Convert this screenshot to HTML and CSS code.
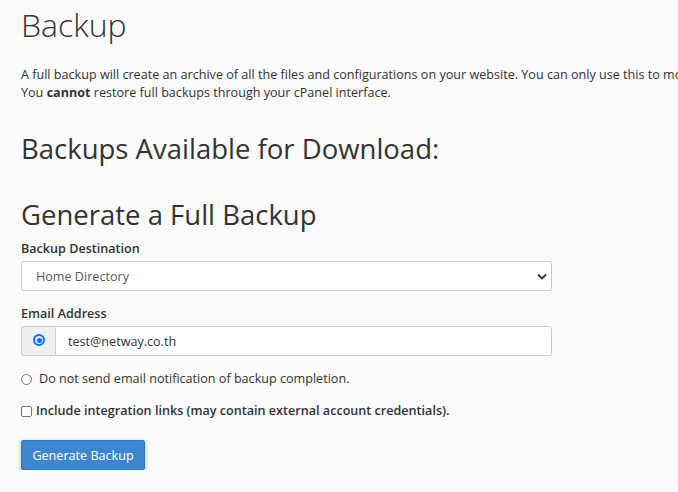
FILE: index.html
```html
<!DOCTYPE html>
<html lang="en">
<head>
  <meta charset="UTF-8">
  <title>Backup</title>
  <link rel="stylesheet" href="styles.css">
</head>
<body>

<div class="page">
  <h1>Backup</h1>

  <p class="intro">A full backup will create an archive of all the files and configurations on your website. You can only use this to move your account to another server or to keep a local copy of your files.</p>
  <p class="intro">You <strong>cannot</strong> restore full backups through your cPanel interface.</p>

  <h2 class="available">Backups Available for Download:</h2>

  <h2 class="generate">Generate a Full Backup</h2>

  <form class="backup-form">
    <div class="form-group">
      <label class="field-label" for="dest">Backup Destination</label>
      <div class="select-wrap">
        <select id="dest" class="form-control">
          <option>Home Directory</option>
        </select>
        <svg class="caret" width="10" height="7" viewBox="0 0 10 7"><path d="M1 1.5l4 4 4-4" fill="none" stroke="#333" stroke-width="1.8"/></svg>
      </div>
    </div>

    <div class="form-group">
      <label class="field-label" for="email">Email Address</label>
      <div class="input-group">
        <span class="addon"><span class="radio checked"></span></span>
        <input type="text" id="email" class="form-control" value="test@netway.co.th">
      </div>
    </div>

    <div class="option">
      <span class="radio"></span>
      <span>Do not send email notification of backup completion.</span>
    </div>

    <div class="option check">
      <span class="checkbox"></span>
      <span>Include integration links (may contain external account credentials).</span>
    </div>

    <button type="button" class="btn">Generate Backup</button>
  </form>
</div>

</body>
</html>
```

FILE: styles.css
```css
body {
  margin: 0;
  background: #fafafa;
  color: #333;
  font-family: 'Open Sans', sans-serif;
  font-size: 12.6px;
  overflow: hidden;
}

.page {
  padding: 5px 0 0 21px;
  width: 900px;
}

h1 {
  margin: 0;
  font-size: 32px;
  font-weight: 300;
  line-height: 40px;
}

.intro {
  margin: 0;
  line-height: 18px;
  white-space: nowrap;
}

h1 + .intro {
  margin-top: 21px;
}

.intro strong {
  font-weight: 700;
}

h2 {
  margin: 0;
  font-size: 27.5px;
  font-weight: 400;
  line-height: 32px;
}

.available {
  margin-top: 31px;
}

.generate {
  margin-top: 34px;
}

.backup-form {
  width: 531px;
  margin-top: 7px;
}

.form-group {
  margin-bottom: 12px;
}

.field-label {
  display: block;
  font-weight: 600;
  line-height: 18px;
  padding-top: 2px;
  margin-bottom: 3px;
}

.form-control {
  box-sizing: border-box;
  width: 100%;
  height: 30px;
  border: 1px solid #ccc;
  border-radius: 3px;
  background: #fff;
  font-family: 'Open Sans', sans-serif;
  font-size: 12.6px;
  color: #555;
  padding: 0 12px;
}

.select-wrap {
  position: relative;
}

select.form-control {
  appearance: none;
  -webkit-appearance: none;
  padding-left: 14px;
}

.caret {
  position: absolute;
  right: 5px;
  top: 12px;
  pointer-events: none;
}

.input-group {
  display: flex;
}

.addon {
  box-sizing: border-box;
  flex: none;
  width: 34px;
  height: 30px;
  background: #eee;
  border: 1px solid #ccc;
  border-right: none;
  border-radius: 3px 0 0 3px;
  display: flex;
  align-items: center;
  justify-content: center;
}

.input-group .form-control {
  border-radius: 0 3px 3px 0;
  color: #333;
}

.radio {
  box-sizing: border-box;
  flex: none;
  display: inline-block;
  width: 11px;
  height: 11px;
  border: 1px solid #767676;
  border-radius: 50%;
  background: #fff;
}

.radio.checked {
  width: 12px;
  height: 12px;
  border: 2px solid #0075ff;
  padding: 1.5px;
  background: #0075ff content-box;
  margin-top: -2px;
}

.option {
  display: flex;
  align-items: center;
  gap: 7px;
  line-height: 18px;
  margin-top: 14px;
}

.option.check {
  margin-top: 14px;
  gap: 4px;
  font-weight: 600;
}

.checkbox {
  box-sizing: border-box;
  flex: none;
  width: 11px;
  height: 11px;
  border: 1px solid #767676;
  border-radius: 2px;
  background: #fff;
}

.btn {
  display: block;
  margin-top: 20px;
  background: #3c87d0;
  color: #fff;
  border: 1px solid #2e79bf;
  border-radius: 2px;
  font-family: 'Open Sans', sans-serif;
  font-size: 12.6px;
  height: 30px;
  width: 124px;
  padding: 0;
  box-shadow: 0 2px 5px rgba(0, 0, 0, 0.25);
  cursor: pointer;
}
```
